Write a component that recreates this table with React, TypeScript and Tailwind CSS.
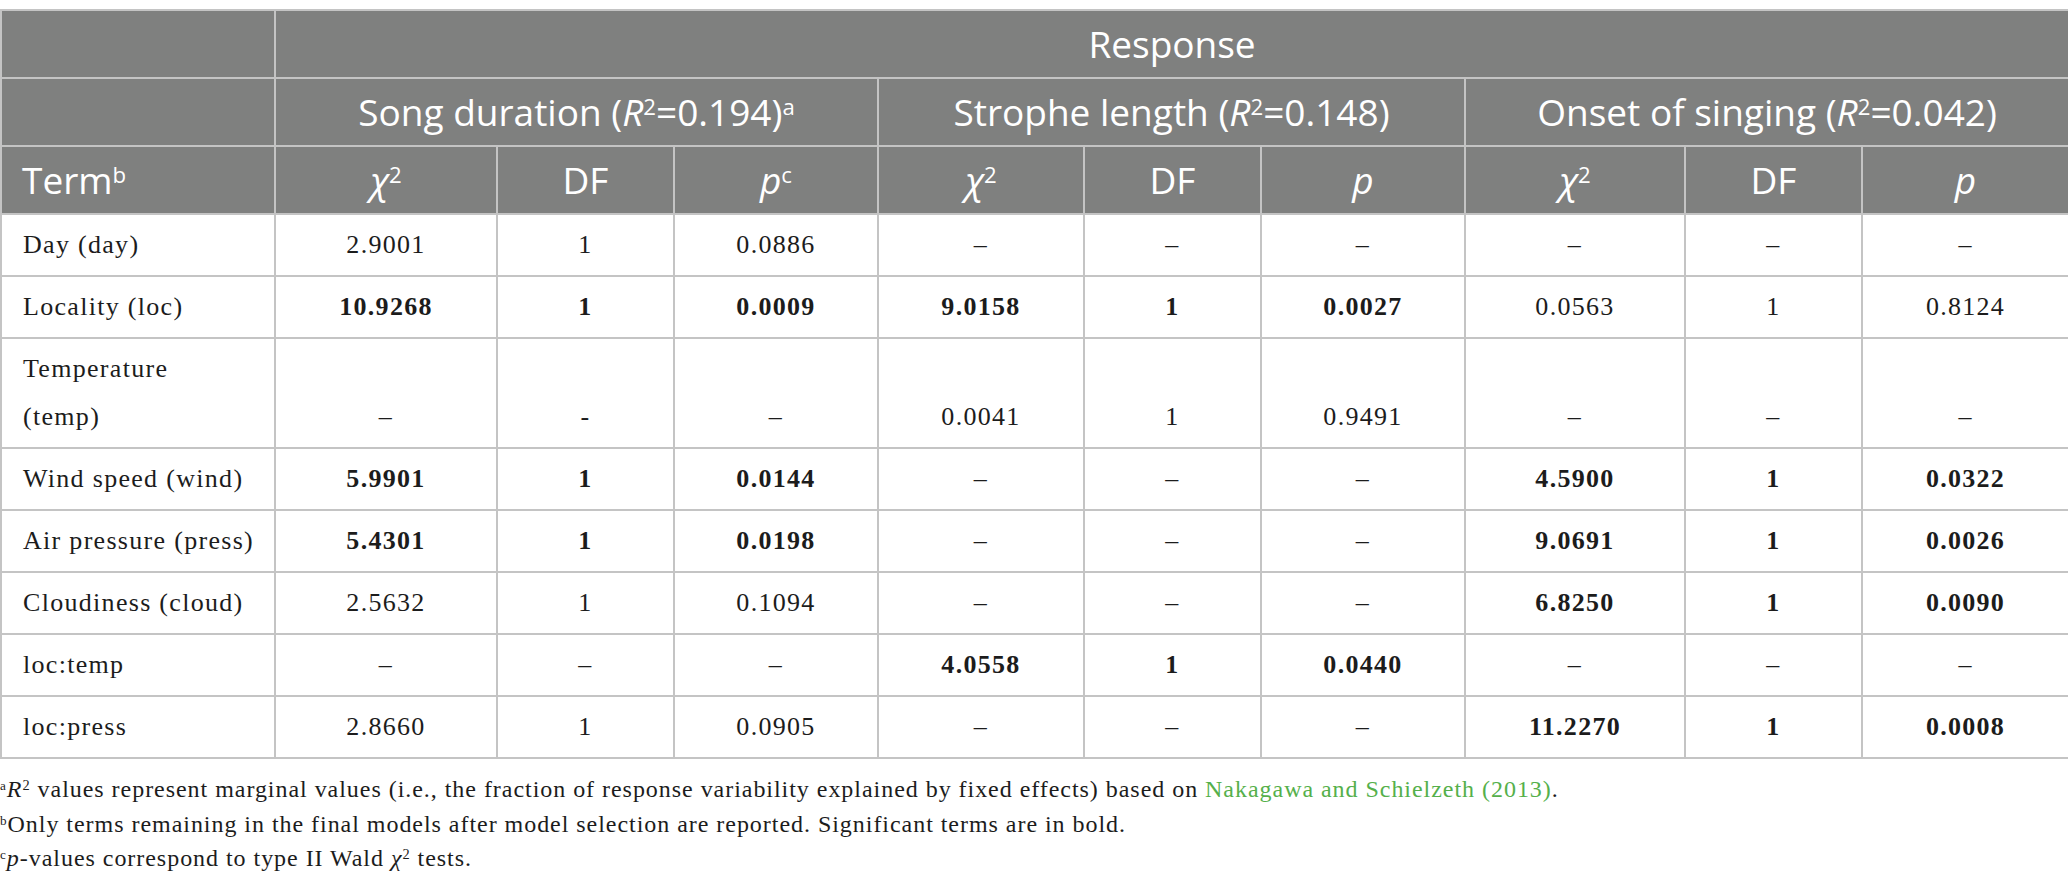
type Cell = { v: string; b?: boolean };

const widths = [274, 222, 177, 204, 206, 177, 204, 220, 177, 207];

const c = (v: string, b = false): Cell => ({ v, b });
const dash = c("–");

const rows: { term: string[]; cells: Cell[] }[] = [
  { term: ["Day (day)"], cells: [c("2.9001"), c("1"), c("0.0886"), dash, dash, dash, dash, dash, dash] },
  {
    term: ["Locality (loc)"],
    cells: [
      c("10.9268", true), c("1", true), c("0.0009", true),
      c("9.0158", true), c("1", true), c("0.0027", true),
      c("0.0563"), c("1"), c("0.8124"),
    ],
  },
  {
    term: ["Temperature", "(temp)"],
    cells: [dash, c("-"), dash, c("0.0041"), c("1"), c("0.9491"), dash, dash, dash],
  },
  {
    term: ["Wind speed (wind)"],
    cells: [
      c("5.9901", true), c("1", true), c("0.0144", true),
      dash, dash, dash,
      c("4.5900", true), c("1", true), c("0.0322", true),
    ],
  },
  {
    term: ["Air pressure (press)"],
    cells: [
      c("5.4301", true), c("1", true), c("0.0198", true),
      dash, dash, dash,
      c("9.0691", true), c("1", true), c("0.0026", true),
    ],
  },
  {
    term: ["Cloudiness (cloud)"],
    cells: [
      c("2.5632"), c("1"), c("0.1094"),
      dash, dash, dash,
      c("6.8250", true), c("1", true), c("0.0090", true),
    ],
  },
  {
    term: ["loc:temp"],
    cells: [dash, dash, dash, c("4.0558", true), c("1", true), c("0.0440", true), dash, dash, dash],
  },
  {
    term: ["loc:press"],
    cells: [
      c("2.8660"), c("1"), c("0.0905"),
      dash, dash, dash,
      c("11.2270", true), c("1", true), c("0.0008", true),
    ],
  },
];

function Chi() {
  return (
    <span>
      <i>χ</i>
      <sup className="text-[0.6em]">2</sup>
    </span>
  );
}

function R2() {
  return (
    <>
      <i>R</i>
      <sup className="text-[0.6em]">2</sup>
    </>
  );
}

export default function App() {
  const th = "border-2 border-[#c4c4c4] bg-[#7f807f] font-normal text-white h-[68px] p-0 align-middle";
  const td = "border-2 border-[#c4c4c4] px-0 py-[6px] leading-[48px] text-center align-bottom";

  return (
    <div className="min-h-screen bg-white pt-[9px] text-[#1c1c1c]">
      <table className="w-[2068px] table-fixed border-collapse">
        <colgroup>
          {widths.map((w, i) => (
            <col key={i} style={{ width: w }} />
          ))}
        </colgroup>
        <thead className="font-['Open_Sans',sans-serif] text-[37px]">
          <tr>
            <th className={th}></th>
            <th colSpan={9} className={th}>
              Response
            </th>
          </tr>
          <tr>
            <th className={th}></th>
            <th colSpan={3} className={th}>
              Song duration (<R2 />=0.194)<sup className="text-[0.6em]">a</sup>
            </th>
            <th colSpan={3} className={th}>
              Strophe length (<R2 />=0.148)
            </th>
            <th colSpan={3} className={th}>
              Onset of singing (<R2 />=0.042)
            </th>
          </tr>
          <tr>
            <th className={`${th} pl-[20px] text-left`}>
              Term<sup className="text-[0.6em]">b</sup>
            </th>
            {[0, 1, 2].map((g) => [
              <th key={`x${g}`} className={th}>
                <Chi />
              </th>,
              <th key={`d${g}`} className={th}>
                DF
              </th>,
              <th key={`p${g}`} className={th}>
                <i>p</i>
                {g === 0 && <sup className="text-[0.6em]">c</sup>}
              </th>,
            ])}
          </tr>
        </thead>
        <tbody className="font-['Liberation_Serif',serif] text-[26px] tracking-[0.05em]">
          {rows.map((r) => (
            <tr key={r.term[0]}>
              <td className={`${td} pl-[21px] text-left`}>
                {r.term.map((t) => (
                  <div key={t}>{t}</div>
                ))}
              </td>
              {r.cells.map((cell, i) => (
                <td key={i} className={`${td} ${cell.b ? "font-bold" : ""}`}>
                  {cell.v}
                </td>
              ))}
            </tr>
          ))}
        </tbody>
      </table>

      <div className="mt-[13px] font-['Liberation_Serif',serif] text-[24px] leading-[34.5px] tracking-[0.04em]">
        <p>
          <sup className="text-[0.55em]">a</sup>
          <R2 /> values represent marginal values (i.e., the fraction of response variability explained by fixed effects)
          based on <span className="text-[#55b04b]">Nakagawa and Schielzeth (2013)</span>.
        </p>
        <p>
          <sup className="text-[0.55em]">b</sup>Only terms remaining in the final models after model selection are
          reported. Significant terms are in bold.
        </p>
        <p>
          <sup className="text-[0.55em]">c</sup>
          <i>p</i>-values correspond to type II Wald <Chi /> tests.
        </p>
      </div>
    </div>
  );
}
